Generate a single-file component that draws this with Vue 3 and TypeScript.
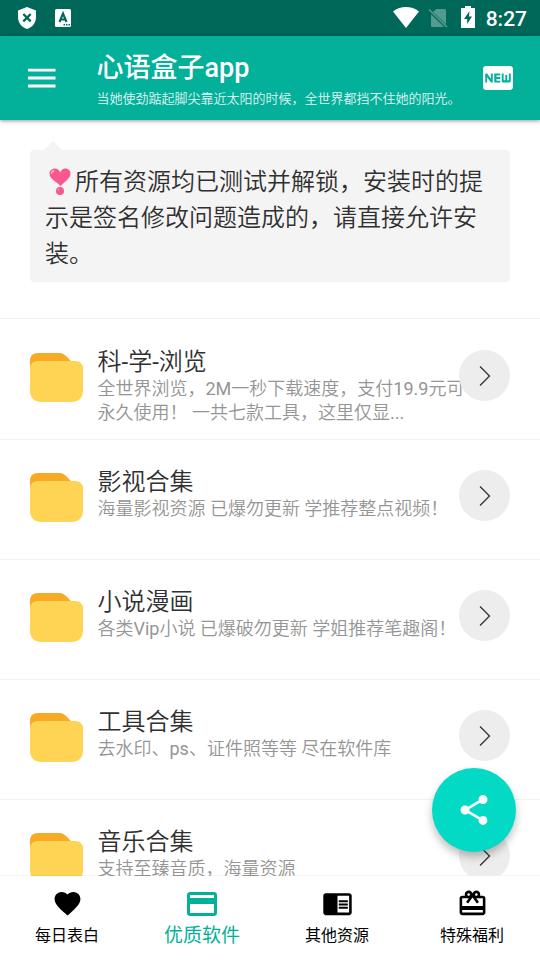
<script setup lang="ts">
interface Folder {
  title: string
  lines: string[]
}

interface Tab {
  label: string
  icon: string
  active?: boolean
}

const folders: Folder[] = [
  { title: '科-学-浏览', lines: ['全世界浏览，2M一秒下载速度，支付19.9元可', '永久使用！ 一共七款工具，这里仅显...'] },
  { title: '影视合集', lines: ['海量影视资源 已爆勿更新 学推荐整点视频！'] },
  { title: '小说漫画', lines: ['各类Vip小说 已爆破勿更新 学姐推荐笔趣阁！'] },
  { title: '工具合集', lines: ['去水印、ps、证件照等等 尽在软件库'] },
  { title: '音乐合集', lines: ['支持至臻音质，海量资源'] },
]

// Latin runs take a heavier weight than the Chinese text around them.
function runs(text: string): { text: string; latin: boolean }[] {
  return text
    .split(/([A-Za-z0-9.\-]+)/)
    .filter((part) => part.length > 0)
    .map((part) => ({ text: part, latin: /^[A-Za-z0-9.\-]+$/.test(part) }))
}

const tabs: Tab[] = [
  {
    label: '每日表白',
    icon: 'M12 21.35l-1.45-1.32C5.4 15.36 2 12.28 2 8.5 2 5.42 4.42 3 7.5 3c1.74 0 3.41.81 4.5 2.09C13.09 3.81 14.76 3 16.5 3 19.58 3 22 5.42 22 8.5c0 3.78-3.4 6.86-8.55 11.54L12 21.35z',
  },
  {
    label: '优质软件',
    active: true,
    icon: 'M20 4H4c-1.11 0-1.99.89-1.99 2L2 18c0 1.11.89 2 2 2h16c1.11 0 2-.89 2-2V6c0-1.11-.89-2-2-2zm0 14H4v-6h16v6zm0-10H4V6h16v2z',
  },
  {
    label: '其他资源',
    icon: 'M13 12h7v1.5h-7zm0-2.5h7V11h-7zm0 5h7V16h-7zM21 4H3c-1.1 0-2 .9-2 2v13c0 1.1.9 2 2 2h18c1.1 0 2-.9 2-2V6c0-1.1-.9-2-2-2zm0 15h-9V6h9v13z',
  },
  {
    label: '特殊福利',
    icon: 'M20 6h-2.18c.11-.31.18-.65.18-1 0-1.66-1.34-3-3-3-1.05 0-1.96.54-2.5 1.35l-.5.67-.5-.68C10.96 2.54 10.05 2 9 2 7.34 2 6 3.34 6 5c0 .35.07.69.18 1H4c-1.11 0-1.99.89-1.99 2L2 19c0 1.11.89 2 2 2h16c1.11 0 2-.89 2-2V8c0-1.11-.89-2-2-2zm-5-2c.55 0 1 .45 1 1s-.45 1-1 1-1-.45-1-1 .45-1 1-1zM9 4c.55 0 1 .45 1 1s-.45 1-1 1-1-.45-1-1 .45-1 1-1zm11 15H4v-2h16v2zm0-5H4V8h5.08L7 10.83 8.62 12 11 8.76l1-1.36 1 1.36L15.38 12 17 10.83 14.92 8H20v6z',
  },
]
</script>

<template>
  <div class="screen">
    <header class="status">
      <svg class="shield" viewBox="0 0 18 22">
        <path fill="#fff" d="M9 0 18 3.5V10C18 16 14 20.500 9 22 4 20.500 0 16 0 10V3.500Z" />
        <path stroke="#006859" stroke-width="2.300" d="M5.300 7 12.700 14.400M12.700 7 5.300 14.400" />
      </svg>
      <svg class="keyboard" viewBox="0 0 16 18">
        <rect width="16" height="18" rx="1.500" fill="#fff" />
        <path fill="none" stroke="#006859" stroke-width="2.100" d="M4.500 13 8 4.500 11.500 13M5.700 10.500H10.300" />
        <path fill="#006859" d="M8.500 15h1.500v1.500H8.500zM11 15h1.500v1.500H11zM13.500 15H15v1.500h-1.500z" />
      </svg>
      <span class="spacer"></span>
      <svg class="wifi" viewBox="0 0 26 21">
        <path fill="#fff" d="M0 4.500C7.500-1.400 18.500-1.400 26 4.500L13 21Z" />
      </svg>
      <svg class="sim" viewBox="0 0 20 20">
        <path fill="#559a8f" d="M8.500 1H16.500Q18 1 18 2.500V16.200L5 3.800ZM3 6.200 16.200 19H4.500Q3 19 3 17.500Z" />
        <path stroke="#559a8f" stroke-width="1.700" d="M1 1.500 19 19" />
      </svg>
      <svg class="battery" viewBox="0 0 14 22">
        <path fill="#fff" d="M4 0h6v2h4v20H0V2h4z" />
        <path fill="#006859" d="M8.500 5 3 13h3.200v5L11 10.500H7.900z" />
      </svg>
      <span class="clock">8:27</span>
    </header>

    <div class="appbar">
      <svg class="menu" viewBox="0 0 28 20">
        <path stroke="#fff" stroke-width="2.800" d="M0 2.200h27.500M0 10h27.500M0 18h27.500" />
      </svg>
      <div class="heading">
        <h1>心语盒子app</h1>
        <p>当她使劲踮起脚尖靠近太阳的时候，全世界都挡不住她的阳光。</p>
      </div>
      <svg class="new" viewBox="0 0 24 24">
        <path fill="#fff" d="M20 4H4c-1.110 0-1.990.890-1.990 2L2 18c0 1.110.890 2 2 2h16c1.110 0 2-.890 2-2V6c0-1.110-.890-2-2-2zM8.500 15H7.300l-2.550-3.500V15H3.500V9h1.250l2.500 3.500V9H8.500v6zm5-4.740H11v1.120h2.500v1.260H11v1.110h2.500V15h-4V9h4v1.260zM20.500 14c0 .550-.450 1-1 1h-4c-.550 0-1-.450-1-1V9h1.250v4.510h1.130V9.990h1.250v3.510h1.120V9h1.250v5z" />
      </svg>
    </div>

    <main class="content">
      <section class="notice">
        <svg class="emoji" viewBox="0 0 30 30">
          <path fill="#f9578f" d="M15.500 20C11 15.500 4.500 12.800 4.500 7.800 4.500 4.700 6.900 2.600 9.900 2.600 12.600 2.600 14.500 4.500 15.200 6.500 16 4.500 17.800 2.600 20.300 2.600 23.400 2.600 25.500 4.900 25.500 7.700 25.500 12.300 19.500 15.500 15.500 20Z" />
          <circle cx="15" cy="25" r="4" fill="#f9578f" />
          <path fill="none" stroke="#ffc0d6" stroke-width="1.500" stroke-linecap="round" d="M6.500 7.200Q6.900 5.200 8.700 4.700" />
          <circle cx="13.500" cy="23.600" r=".8" fill="#ffa0c0" />
        </svg>所有资源均已测试并解锁，安装时的提<br />示是签名修改问题造成的，请直接允许安<br />装。
      </section>

      <ul class="list">
        <li v-for="folder in folders" :key="folder.title" class="row">
          <svg class="folder" viewBox="0 0 53 50">
            <path fill="#f9aa25" d="M0 18V8Q0 0 8 0H30Q33 0 35.500 2.500L41 8V18H0Z" />
            <path fill="#ffd454" d="M8 8H45Q53 8 53 16V37Q53 49 41 49H12Q0 49 0 37V16Q0 8 8 8Z" />
          </svg>
          <div class="info">
            <h2><span v-for="(run, i) in runs(folder.title)" :key="i" :class="{ latin: run.latin }">{{ run.text }}</span></h2>
            <p v-for="line in folder.lines" :key="line"><span v-for="(run, i) in runs(line)" :key="i" :class="{ latin: run.latin }">{{ run.text }}</span></p>
          </div>
          <span class="go">
            <svg viewBox="0 0 12 22"><path fill="none" stroke="#333" stroke-width="1.300" d="M1 1.500 10.500 11 1 20.500" /></svg>
          </span>
        </li>
      </ul>
    </main>

    <nav class="tabs">
      <div v-for="tab in tabs" :key="tab.label" class="tab" :class="{ active: tab.active }">
        <svg viewBox="0 0 24 24"><path fill="currentColor" :d="tab.icon" /></svg>
        <span>{{ tab.label }}</span>
      </div>
    </nav>

    <button class="fab" aria-label="分享">
      <svg viewBox="0 0 24 24">
        <path fill="#fff" d="M18 16.080c-.760 0-1.440.300-1.960.770L8.910 12.700c.050-.230.090-.460.090-.700s-.040-.470-.090-.700l7.050-4.110c.540.500 1.250.810 2.040.810 1.660 0 3-1.340 3-3s-1.340-3-3-3-3 1.340-3 3c0 .240.040.470.090.700L8.040 9.810C7.500 9.310 6.790 9 6 9c-1.660 0-3 1.340-3 3s1.340 3 3 3c.790 0 1.500-.310 2.040-.810l7.120 4.160c-.050.210-.080.430-.080.650 0 1.610 1.310 2.920 2.920 2.920s2.920-1.310 2.920-2.920-1.310-2.920-2.920-2.920z" />
      </svg>
    </button>
  </div>
</template>

<style>
body {
  margin: 0;
  overflow: hidden;
}
</style>

<style scoped>
.screen {
  position: relative;
  display: flex;
  flex-direction: column;
  width: 540px;
  height: 960px;
  overflow: hidden;
  background: #fff;
  color: #303030;
  font-family: Roboto, "Noto Sans CJK SC", sans-serif;
}
h1, h2, p, ul {
  margin: 0;
  padding: 0;
  font-weight: 350;
}
svg {
  display: block;
  flex: none;
}
.status {
  display: flex;
  align-items: center;
  flex: none;
  height: 36px;
  padding: 0 13px 0 18px;
  box-sizing: border-box;
  background: #006859;
}
.shield {
  width: 18px;
  height: 22px;
}
.keyboard {
  width: 16px;
  height: 18px;
  margin-left: 19px;
}
.spacer {
  flex: 1;
}
.wifi {
  width: 26px;
  height: 21px;
  margin: 0 9px 2px 0;
}
.sim {
  width: 20px;
  height: 20px;
  margin-right: 13px;
}
.battery {
  width: 14px;
  height: 22px;
  margin: 0 11px 3px 0;
}
.clock {
  color: #fff;
  font-size: 21px;
  font-weight: 500;
  line-height: 36px;
  padding-top: 2px;
}
.appbar {
  position: relative;
  display: flex;
  align-items: center;
  flex: none;
  height: 84px;
  padding: 0 24px 0 28px;
  box-sizing: border-box;
  background: #03b09a;
  color: #fff;
  box-shadow: 0 1px 4px rgba(0, 0, 0, 0.4);
}
.menu {
  width: 28px;
  height: 20px;
}
.heading {
  flex: 1;
  padding: 2px 0 0 40.500px;
}
h1 {
  font-size: 27px;
  font-weight: 500;
  line-height: 36px;
}
.heading p {
  font-size: 13px;
  line-height: 20px;
  padding-top: 3px;
  color: #e0f5f2;
  white-space: nowrap;
}
.new {
  width: 36px;
  height: 36px;
}
.content {
  flex: 1;
  min-height: 0;
  overflow: hidden;
}
.notice {
  position: relative;
  height: 132px;
  margin: 30px 30px 0;
  padding: 14px 15px 10px;
  box-sizing: border-box;
  border-radius: 4px;
  background: #f4f4f4;
  font-size: 24px;
  font-weight: 350;
  line-height: 36px;
  white-space: nowrap;
}
.notice::before {
  content: "";
  position: absolute;
  left: 14px;
  top: -9px;
  border: solid transparent;
  border-width: 0 9px 9px;
  border-bottom-color: #f4f4f4;
}
.emoji {
  display: inline-block;
  width: 30px;
  height: 30px;
  vertical-align: -6px;
}
.list {
  margin-top: 36px;
  border-top: 1px solid #f2f2f2;
  padding-top: 1px;
  list-style: none;
}
.row {
  display: flex;
  align-items: flex-start;
  height: 120px;
  padding: 30px 30px 0;
  box-sizing: border-box;
  border-bottom: 1px solid #f2f2f2;
}
.folder {
  width: 53px;
  height: 50px;
  margin-top: 3px;
}
.info {
  flex: 1;
  width: 0;
  padding-left: 14.500px;
  margin-top: -5px;
  white-space: nowrap;
}
h2 {
  font-size: 24px;
  line-height: 34px;
  height: 32px;
}
.info p {
  color: #959595;
  font-size: 18px;
  line-height: 24px;
}
.latin {
  font-weight: 400;
}
.go {
  position: relative;
  display: flex;
  align-items: center;
  justify-content: center;
  flex: none;
  width: 51px;
  height: 51px;
  border-radius: 50%;
  background: #ededed;
}
.go svg {
  width: 12px;
  height: 22px;
}
.tabs {
  display: grid;
  grid-template-columns: repeat(4, 1fr);
  flex: none;
  height: 84px;
  background: #fff;
  box-shadow: 0 -1px 0 rgba(0, 0, 0, 0.04);
}
.tab {
  display: flex;
  flex-direction: column;
  align-items: center;
  padding: 12px 1px 0 0;
  color: #000;
  font-size: 16px;
  font-weight: 400;
}
.tab svg {
  width: 31px;
  height: 31px;
}
.tab span {
  line-height: 24px;
  margin-top: 5px;
}
.tab.active {
  padding-top: 10px;
  color: #03b09a;
  font-size: 19px;
}
.tab.active svg {
  width: 36px;
  height: 36px;
}
.tab.active span {
  margin-top: 2px;
}
.fab {
  position: absolute;
  left: 432px;
  top: 768px;
  display: flex;
  align-items: center;
  justify-content: center;
  width: 84px;
  height: 84px;
  padding: 0;
  border: 0;
  border-radius: 50%;
  background: #03dac5;
  box-shadow: 0 5px 9px rgba(0, 0, 0, 0.26);
}
.fab svg {
  width: 36px;
  height: 36px;
}
</style>
